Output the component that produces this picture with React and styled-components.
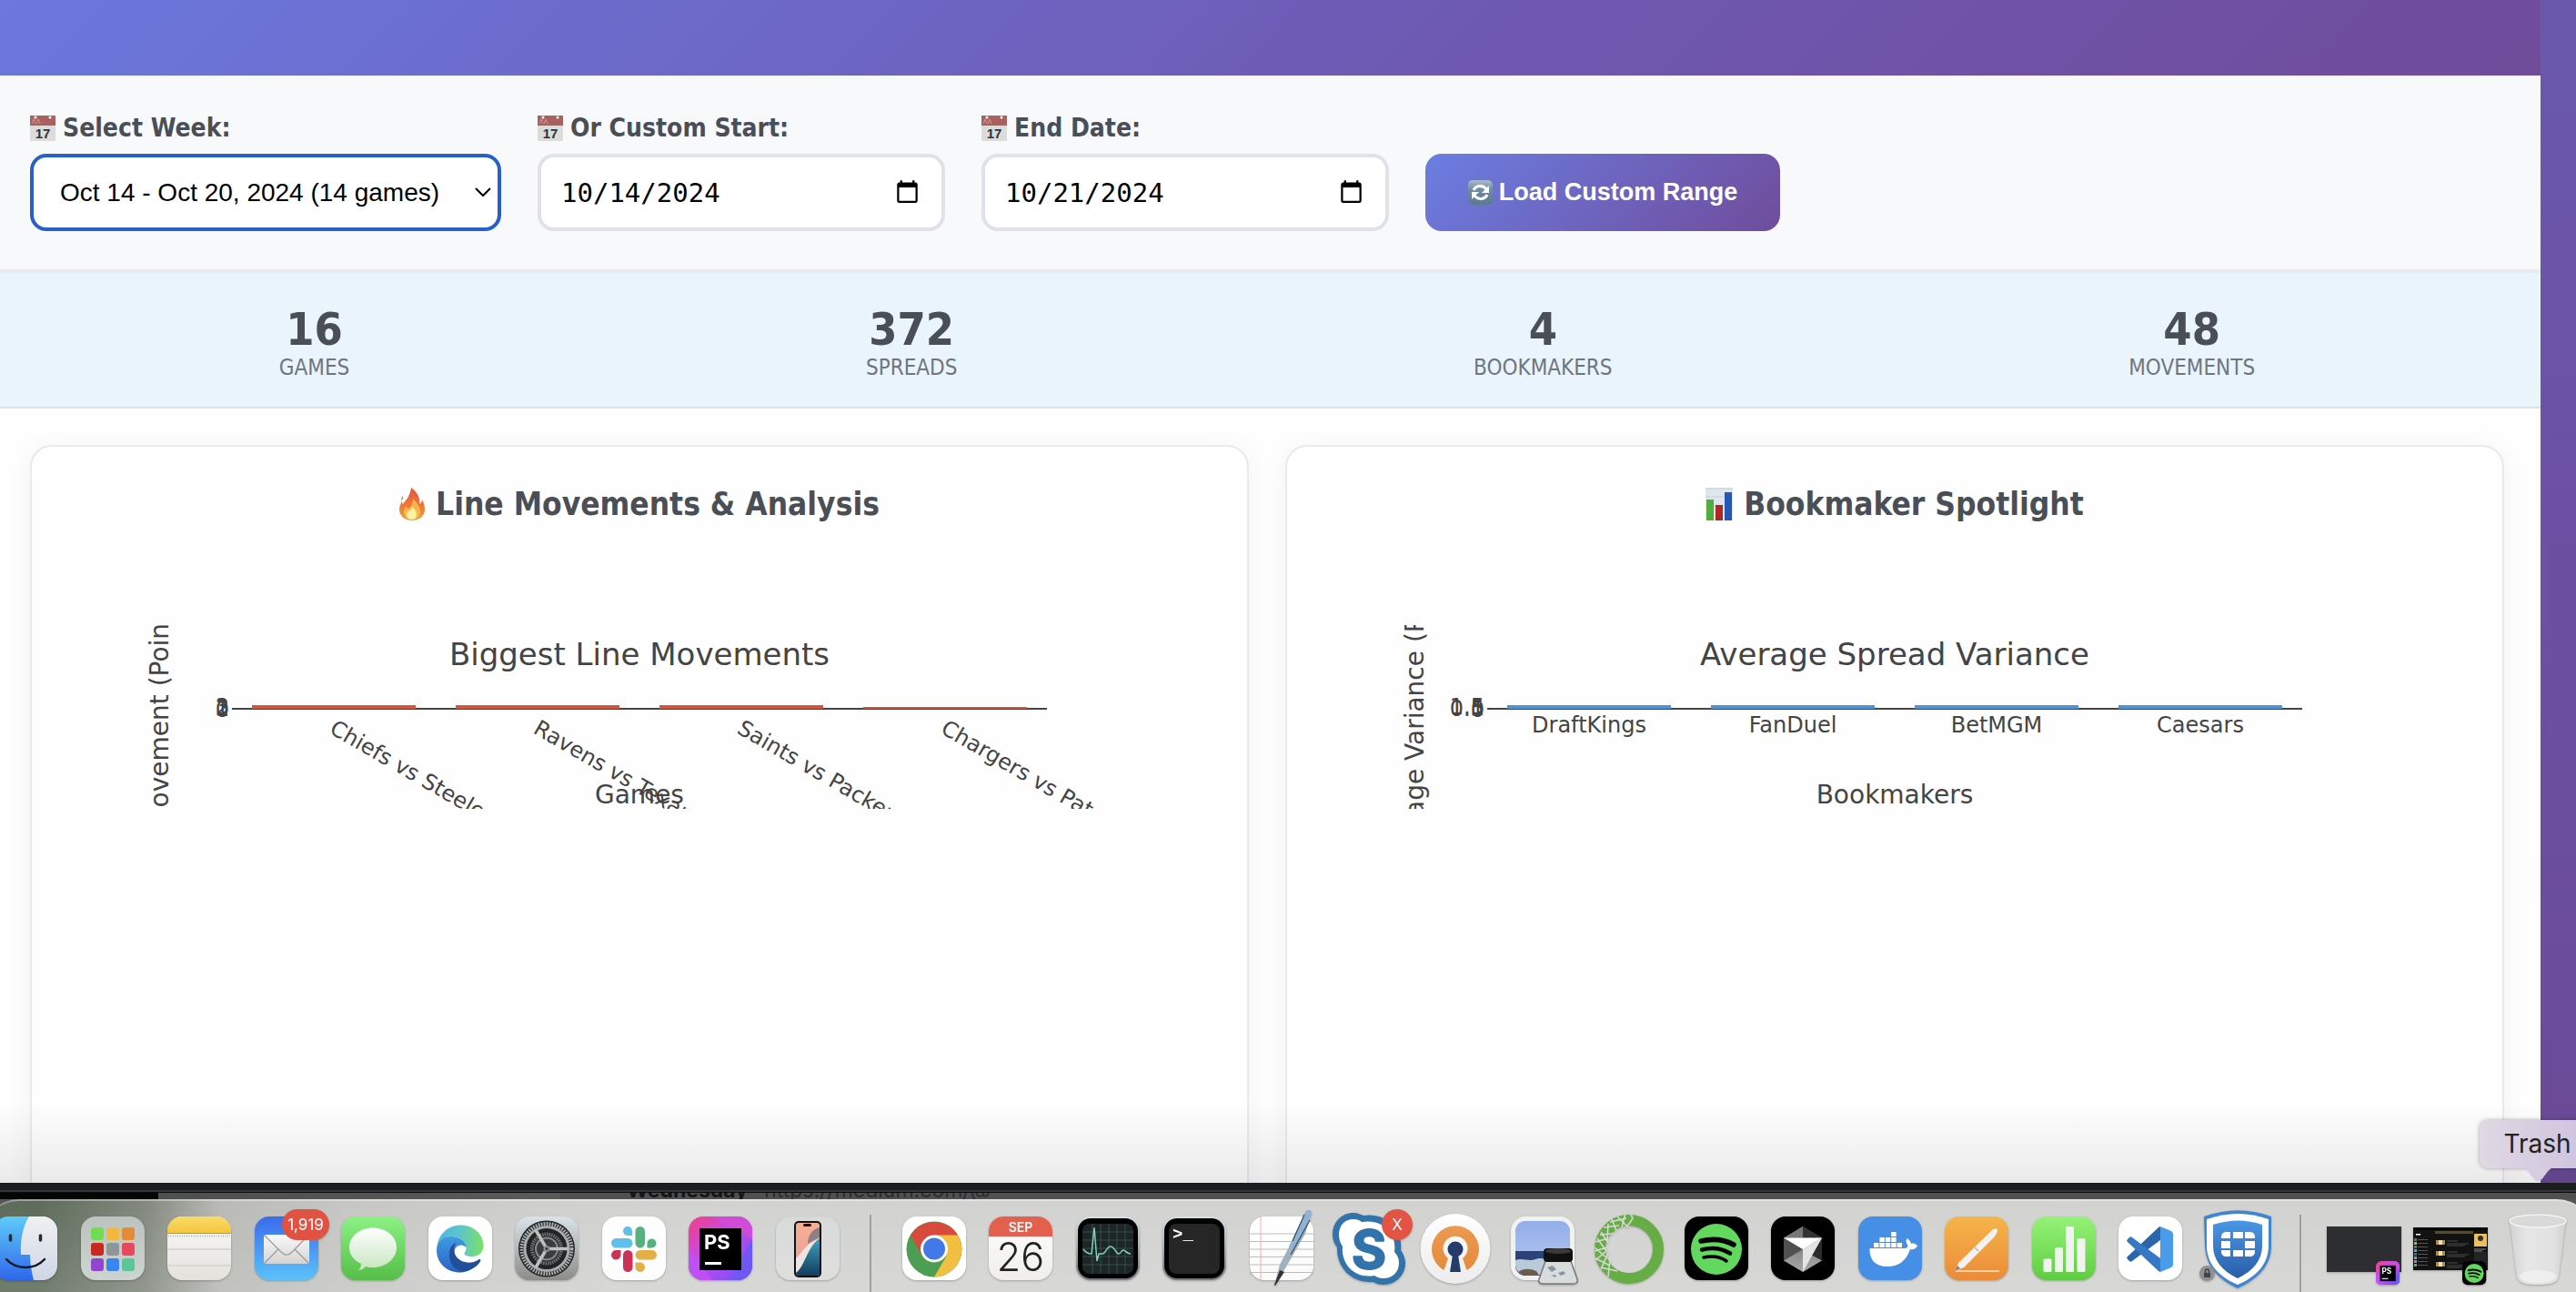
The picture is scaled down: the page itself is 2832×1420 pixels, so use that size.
import React from "react";
import styled, { createGlobalStyle } from "styled-components";

const UI = '"DejaVu Sans Condensed", "DejaVu Sans", sans-serif';
const MAC = 'Inter, "Liberation Sans", sans-serif';

const GlobalStyle = createGlobalStyle`
  *, *::before, *::after { box-sizing: border-box; }
  body { margin: 0; font-family: ${UI}; overflow: hidden; }
  button, input, select { margin: 0; }
`;

/* ---------- desktop ---------- */

const Desktop = styled.div`
  display: flex;
  flex-direction: column;
  height: 100vh;
  overflow: hidden;
  background: #565656;
`;

const BrowserWindow = styled.main`
  position: relative;
  flex: 1;
  min-height: 0;
  overflow: hidden;
  padding-right: 39px;
  background: linear-gradient(180deg, #6859ad 0%, #6c51a4 40%, #6a4a97 100%);
  &::after {
    content: "";
    position: absolute;
    inset: auto 0 0 0;
    height: 90px;
    background: linear-gradient(180deg, rgba(0, 0, 0, 0), rgba(0, 0, 0, 0.08));
  }
`;

const WindowEdge = styled.div`
  height: 11px;
  background: #1b1d1e;
  border-bottom: 1px solid #0c0c0c;
  box-shadow: inset 0 -2px 0 #333536;
`;

const Behind = styled.div`
  display: flex;
  align-items: flex-end;
  gap: 18px;
  height: 7px;
  padding-left: 689px;
  overflow: hidden;
  background: linear-gradient(90deg, #040604 174px, #4f4f4f 174px, #5a5a5a 616px, #505050 616px);
  font-family: ${MAC};
  font-size: 23px;
  line-height: 20px;
  color: #2c2c2c;
`;

const BehindStrong = styled.strong`
  color: #151515;
`;

/* ---------- page ---------- */

const Page = styled.div`
  min-height: 1400px;
  background: #fefefe;
`;

const Header = styled.header`
  height: 83px;
  background: linear-gradient(135deg, #6b78dd 0%, #6e58b0 60%, #704c9b 100%);
`;

const Controls = styled.form`
  display: flex;
  align-items: flex-end;
  gap: 40px;
  padding: 40px 40px 42px 33px;
  background: #f8f9fb;
  border-bottom: 4px solid #e9ebee;
`;

const Field = styled.div`
  display: flex;
  flex-direction: column;
  gap: 10px;
  width: ${(p) => p.$width}px;
`;

const Label = styled.label`
  display: flex;
  align-items: center;
  gap: 8px;
  line-height: 36px;
  font-size: 28px;
  font-weight: 700;
  color: #4a4f57;
`;

const SelectWrap = styled.div`
  position: relative;
  display: flex;
`;

const Select = styled.select`
  appearance: none;
  width: 100%;
  height: 85px;
  padding: 0 48px 0 29px;
  border: 4px solid #2860c9;
  border-radius: 18px;
  background: #fff;
  outline: none;
  font-family: "Liberation Sans", Arial, sans-serif;
  font-size: 28px;
  color: #000;
`;

const Chevron = styled.svg`
  position: absolute;
  right: 11px;
  top: 36px;
  pointer-events: none;
`;

const DateInput = styled.input`
  width: 100%;
  height: 85px;
  padding: 0 21px 0 22px;
  border: 4px solid #e0e2e8;
  border-radius: 18px;
  background: #fff;
  font-family: "DejaVu Sans Mono", monospace;
  font-size: 29px;
  color: #000;
  &::-webkit-datetime-edit-fields-wrapper,
  &::-webkit-datetime-edit-month-field,
  &::-webkit-datetime-edit-day-field,
  &::-webkit-datetime-edit-year-field {
    padding: 0;
  }
`;

const LoadButton = styled.button`
  display: flex;
  align-items: center;
  justify-content: center;
  gap: 7px;
  width: 390px;
  height: 85px;
  border: 0;
  border-radius: 18px;
  background: linear-gradient(135deg, #6b7ee2, #704c9b);
  font-family: "Liberation Sans", Arial, sans-serif;
  font-size: 27px;
  font-weight: 700;
  color: #fff;
`;

const Stats = styled.section`
  display: flex;
  justify-content: space-around;
  padding: 34px 30px 29px 23px;
  background: #e9f4fd;
  border-bottom: 2px solid #dee2e6;
`;

const Stat = styled.div`
  display: flex;
  flex-direction: column;
  align-items: center;
`;

const StatNumber = styled.div`
  font-size: 50px;
  line-height: 56px;
  font-weight: 700;
  color: #4a4f57;
`;

const StatLabel = styled.div`
  font-size: 24px;
  line-height: 28px;
  text-transform: uppercase;
  color: #6f767e;
`;

const Cards = styled.section`
  display: grid;
  grid-template-columns: 1fr 1fr;
  gap: 40px;
  padding: 40px 40px 0 33px;
`;

const Card = styled.article`
  display: flex;
  flex-direction: column;
  align-items: center;
  gap: 105px;
  height: 1100px;
  padding: 35px 40px;
  border: 2px solid #e9e9ee;
  border-radius: 24px;
  background: #fefefe;
  box-shadow: 0 4px 30px rgba(0, 0, 0, 0.05);
`;

const CardTitle = styled.h2`
  display: flex;
  align-items: center;
  gap: 12px;
  margin: 0;
  font-size: 35px;
  line-height: 56px;
  font-weight: 700;
  color: #4a4f57;
`;

const Chart = styled.svg`
  display: block;
  overflow: hidden;
  font-family: "DejaVu Sans", Verdana, sans-serif;
  fill: #444;
`;

/* ---------- dock ---------- */

const Dock = styled.nav`
  display: flex;
  align-items: flex-start;
  justify-content: space-between;
  height: 102px;
  margin: 0 -19px;
  padding: 17px 26px 0 12px;
  border-top: 2px solid rgba(255, 255, 255, 0.3);
  border-radius: 40px 40px 0 0;
  background:
    linear-gradient(180deg, rgba(255, 255, 255, 0), rgba(255, 255, 255, 0.12)),
    linear-gradient(90deg, #5d6c5a 60px, #84897f 180px, #b9b9b6 260px, #c6c6c4 400px, #d2d2d0 700px);
`;

const DockButton = styled.button`
  flex: none;
  width: 70px;
  height: 70px;
  padding: 0;
  border: 0;
  background: none;
  svg {
    display: block;
    overflow: visible;
    filter: drop-shadow(0 1px 1px rgba(0, 0, 0, 0.25));
  }
`;

const Divider = styled.div`
  flex: none;
  width: 2px;
  height: 90px;
  margin: -2px 8px 0;
  background: #a0a09f;
`;

const Tooltip = styled.div`
  position: absolute;
  z-index: 2;
  right: -21px;
  bottom: 16px;
  width: 127px;
  height: 53px;
  border-radius: 9px;
  background: linear-gradient(90deg, #dfd9e3, #cdc1de);
  box-shadow: 0 0 4px rgba(0, 0, 0, 0.35);
  font-family: ${MAC};
  font-size: 28px;
  line-height: 53px;
  text-align: center;
  color: #222;
`;

const TooltipTail = styled.svg`
  position: absolute;
  left: 46px;
  top: 52px;
`;

/* ---------- emoji drawings ---------- */

const CalendarEmoji = () => (
  <svg width="28" height="28" viewBox="0 0 28 28" aria-hidden="true">
    <rect width="28" height="28" rx="1" fill="#dcdcda" />
    <rect width="28" height="11" fill="#a9605e" />
    <path d="M2 9l2-5 2 5M7 9l2-5 2 5" stroke="#c99" fill="none" />
    <circle cx="6" cy="2" r="1.5" fill="#fff" />
    <circle cx="22" cy="2" r="1.5" fill="#fff" />
    <text x="14" y="25" fontSize="15" textAnchor="middle" fill="#333" fontFamily="Liberation Sans">17</text>
  </svg>
);

const RefreshEmoji = () => (
  <svg width="27" height="27" viewBox="0 0 27 27" aria-hidden="true">
    <defs>
      <linearGradient id="rf" x2="0" y2="1">
        <stop stopColor="#a9bccb" /><stop offset=".4" stopColor="#6d8ba3" /><stop offset="1" stopColor="#5a7a91" />
      </linearGradient>
    </defs>
    <rect width="27" height="27" rx="5" fill="url(#rf)" />
    <g fill="none" stroke="#fff" strokeWidth="3">
      <path d="M6 11a8 7.500 0 0 1 14-1" />
      <path d="M21 16a8 7.500 0 0 1-14 1" />
    </g>
    <path d="M23 6v8h-8zM4 21v-8h8z" fill="#fff" />
  </svg>
);

const FireEmoji = () => (
  <svg width="28" height="36" viewBox="0 0 28 36" aria-hidden="true">
    <defs>
      <linearGradient id="fr" x2="0" y2="1">
        <stop stopColor="#e5533c" /><stop offset=".55" stopColor="#ec7a38" /><stop offset="1" stopColor="#f0a03c" />
      </linearGradient>
    </defs>
    <path d="M13 0c7 5 10 11 9 18 2-1 3-3 3-5 2 4 3 7 3 11 0 7-6 12-14 12S0 31 0 24c0-4 2-7 3-10 0 2 0 3 1 4 2-3 8-8 9-18z" fill="url(#fr)" />
    <path d="M4 9c-1 2-2 3-2 5 2-1 2-3 2-5z" fill="#e5533c" />
    <path d="M15 12c4 4 8 9 8 14 0 6-4 9-9 9s-9-3-9-8c0-3 1-5 3-7 0 2 1 3 2 3 3-2 5-5 5-11z" fill="#f6b64a" />
    <path d="M14 21c3 3 5 5 5 8 0 4-2 6-5 6s-6-2-6-5 2-4 3-5c2 0 3-2 3-4z" fill="#fdf3a0" />
  </svg>
);

const BarsEmoji = () => (
  <svg width="30" height="36" viewBox="0 0 30 36" aria-hidden="true">
    <rect width="30" height="36" fill="#dfe6ee" />
    <path d="M0 1h30M0 10h30M0 20h30" stroke="#c6d0da" />
    <rect x="1" y="13" width="8" height="23" fill="#4fae3c" />
    <rect x="11" y="19" width="8" height="17" fill="#ad2a22" />
    <rect x="21" y="5" width="8" height="31" fill="#2557b4" />
  </svg>
);

/* ---------- charts ---------- */

function BarChart({ title, xTitle, yTitle, color, bars, ticks, angled }) {
  return (
    <Chart width="1256" height="202" viewBox="0 0 1256 202" role="img" aria-label={title}>
      <text x="628" y="44" fontSize="34" textAnchor="middle">{title}</text>
      <rect x="180" y="91" width="896" height="2" />
      {bars.map((b, i) => (
        <g key={b.name}>
          <rect x={202 + i * 224} y={92 - b.height} width="180" height={b.height} fill={color} />
          {angled ? (
            <text transform={`translate(${286 + i * 224} 118) rotate(30)`} fontSize="24">{b.name}</text>
          ) : (
            <text x={292 + i * 224} y="118" fontSize="24" textAnchor="middle">{b.name}</text>
          )}
        </g>
      ))}
      {ticks.map((t, i) => (
        <text key={t} x="177" y={101 - i} fontSize="24" textAnchor="end">{t}</text>
      ))}
      <text x="628" y="196" fontSize="28" textAnchor="middle">{xTitle}</text>
      <text transform="translate(110 93) rotate(-90)" fontSize="28" textAnchor="middle">{yTitle}</text>
    </Chart>
  );
}

/* ---------- dock icons, each on a 70 by 70 tile ---------- */

const Grad = ({ id, from, to }) => (
  <defs>
    <linearGradient id={id} x2="0" y2="1">
      <stop stopColor={from} /><stop offset="1" stopColor={to} />
    </linearGradient>
  </defs>
);

const Tile = ({ id, from, to }) => (
  <>
    <Grad id={id} from={from} to={to} />
    <rect width="70" height="70" rx="16" fill={`url(#${id})`} />
  </>
);

const Finder = () => (
  <>
    <Tile id="fi" from="#5fcbf8" to="#2f67ea" />
    <Grad id="fi2" from="#f0f0f2" to="#cfd6e4" />
    <path d="M39 0h15a16 16 0 0 1 16 16v38a16 16 0 0 1-16 16H44c-2-8-4-18-4-28H30c-1-16 2-31 9-42z" fill="url(#fi2)" />
    <path d="M18.500 21v5M51.500 21v5" stroke="#1e2a3a" strokeWidth="3.500" strokeLinecap="round" />
    <path d="M14 47c11 12 31 12 42 0" fill="none" stroke="#111a26" strokeWidth="2.500" strokeLinecap="round" />
  </>
);

const Launchpad = () => (
  <>
    <Tile id="lp" from="#bcc3bf" to="#cdd3cf" />
    {["#6fdc52", "#f2b93c", "#e58a35", "#c8281f", "#8f9699", "#e8485c", "#9246d0", "#3a86f0", "#5cc69a"].map((c, i) => (
      <rect key={c} x={11 + (i % 3) * 17} y={12 + Math.floor(i / 3) * 17} width="14" height="14" rx="3" fill={c} />
    ))}
  </>
);

const Notes = () => (
  <>
    <Tile id="no" from="#fbfaf8" to="#e3e1dc" />
    <Grad id="no2" from="#fadb68" to="#f4c63c" />
    <path d="M0 18v-2A16 16 0 0 1 16 0h38a16 16 0 0 1 16 16v2z" fill="url(#no2)" />
    <path d="M0 18.500h70" stroke="#b9963a" />
    <path d="M1 21.500h68" stroke="#aaa" strokeWidth="1.500" strokeDasharray="1 1.500" />
    <path d="M0 36h70M0 54h70" stroke="#d3d2d0" strokeWidth="1.500" />
  </>
);

const Mail = () => (
  <>
    <Tile id="ma" from="#3a6ceb" to="#5cc2f9" />
    <Grad id="ma2" from="#fafafa" to="#d3d3d3" />
    <rect x="10" y="20" width="50" height="32" rx="3" fill="url(#ma2)" />
    <path d="M11 21l19 19c3 3 7 3 10 0l19-19M11 51l15-15M59 51L44 36" fill="none" stroke="#9a9a9a" strokeWidth="1.200" />
    <rect x="30" y="-8" width="52" height="34" rx="17" fill="#e15243" />
    <text x="56" y="15" fontFamily="Inter" fontSize="17" textAnchor="middle" fill="#fff">1,919</text>
  </>
);

const Messages = () => (
  <>
    <Tile id="me" from="#8bf284" to="#56bd48" />
    <Grad id="me2" from="#ffffff" to="#c6e6bf" />
    <path d="M35 12.500c14.500 0 26 9.500 26 21.500S49.500 56 35 56c-3 0-5 0-8-1-2 2-5 4-8 4 2-2 3-4 3-7C14 48 9 42 9 34c0-12 11.500-21.500 26-21.500z" fill="url(#me2)" />
  </>
);

const Edge = () => (
  <>
    <defs>
      <linearGradient id="ed"><stop stopColor="#4fb4e6" /><stop offset=".5" stopColor="#5cc6c8" /><stop offset="1" stopColor="#7be065" /></linearGradient>
    </defs>
    <Grad id="ed2" from="#3f9be2" to="#2a63c4" />
    <rect width="70" height="70" rx="16" fill="#fff" />
    <path d="M9.500 33C11 19 22 9.500 35.500 9.500c14.500 0 25 10.500 25 22.500 0 8-6 12-12.500 12-4.500 0-8.500-1-8.500-3s2-2.500 2-6.500c0-6-6-12.500-16.500-12.500C17 22 12 27 9.500 33z" fill="url(#ed)" />
    <path d="M9 37c0-9 7-15 16-15 10 0 16.500 6 16.500 12-4-4.500-13-3-13 6 0 10 11 17 23 14-4 5-11 7.500-16.500 7.500C20 61.500 9 51 9 37z" fill="url(#ed2)" />
    <path d="M23 42c0-7 3-12 8-13.500-3 3-3 7-2.500 10.500C30 48 43 55 55 47.500c2-1 3 0 2 2C52 57 44 60.500 36 60.500 28 58 23 51 23 42z" fill="#214f99" />
  </>
);

const Settings = () => (
  <>
    <Tile id="se" from="#d8e3ea" to="#8e8c88" />
    <circle cx="35" cy="35.500" r="31" fill="#222426" />
    <circle cx="35" cy="35.500" r="27.500" fill="none" stroke="#aeb1b2" strokeWidth="4" strokeDasharray="1.800 1.200" />
    <circle cx="35" cy="35.500" r="24" fill="none" stroke="#a9adae" strokeWidth="3" />
    <circle cx="35" cy="35.500" r="16" fill="none" stroke="#717476" strokeWidth="4" strokeDasharray="1.500 1" />
    <circle cx="35" cy="35.500" r="12" fill="#3a3c3e" stroke="#8a8d8f" strokeWidth="2" />
    <path d="M35 35.500h24M35 35.500L23 15M35 35.500L23 56" stroke="#bcc0c1" strokeWidth="3.500" />
    <circle cx="35" cy="35.500" r="3.500" fill="#888b8c" />
    <circle cx="35" cy="35.500" r="1.200" fill="#222" />
  </>
);

const Slack = () => (
  <>
    <rect width="70" height="70" rx="16" fill="#fdfdfd" />
    <g fill="#5fc0ea"><path d="M33 21V16a5 5 0 1 0-5 5z" /><rect x="10" y="24" width="23.500" height="10.500" rx="5.250" /></g>
    <g fill="#57b07f"><rect x="36.500" y="11" width="10.500" height="23.500" rx="5.250" /><path d="M49.500 34.500h5a5 5 0 1 0-5-5z" /></g>
    <g fill="#cd3158"><path d="M20.500 37h-5a5.250 5.250 0 1 0 5 5z" /><rect x="23" y="37" width="10.500" height="24" rx="5.250" /></g>
    <g fill="#e2b047"><rect x="36.500" y="37" width="23.500" height="10.500" rx="5.250" /><path d="M36.500 50.500v5a5.250 5.250 0 1 0 5-5z" /></g>
  </>
);

const PhpStorm = () => (
  <>
    <defs>
      <linearGradient id="ps" x2="1" y2="1"><stop stopColor="#f43f83" /><stop offset=".45" stopColor="#c44af0" /><stop offset="1" stopColor="#6a52f7" /></linearGradient>
      <clipPath id="psc"><rect width="70" height="70" rx="16" /></clipPath>
    </defs>
    <g clipPath="url(#psc)">
      <rect width="70" height="70" fill="url(#ps)" />
      <path d="M0 35L26 70H0z" fill="#c04ff5" />
      <path d="M25 0h45v25z" fill="#d04bd8" />
      <path d="M70 25v45H45z" fill="#6f57f6" />
    </g>
    <rect x="12" y="13" width="46" height="46" fill="#000" />
    <text x="17" y="36" fontFamily="Inter" fontSize="22" fontWeight="700" fill="#fff">PS</text>
    <rect x="18" y="50" width="18" height="3" fill="#fff" />
  </>
);

const Phone = () => (
  <>
    <Tile id="ip" from="#d8dada" to="#dededd" />
    <Grad id="ip2" from="#f3b092" to="#ef9a9c" />
    <Grad id="ip3" from="#3fa3bf" to="#123c5e" />
    <rect x="20" y="5" width="30" height="62" rx="5" fill="#111" />
    <rect x="22" y="7" width="26" height="58" rx="3" fill="url(#ip2)" />
    <path d="M48 12c-8 2-13 9-13 18l13-7z" fill="#8c8086" />
    <path d="M22 46c8-7 10-16 26-22v10L30 60l-8 2z" fill="#efe4e2" />
    <path d="M48 24v38a3 3 0 0 1-3 3H25a3 3 0 0 1-3-3c10-7 12-28 26-38z" fill="url(#ip3)" />
    <rect x="30" y="8" width="9" height="3" rx="1.500" fill="#111" />
  </>
);

const Chrome = () => (
  <>
    <rect width="70" height="70" rx="16" fill="#fff" />
    <circle cx="35" cy="36" r="30.500" fill="#4c9e52" />
    <path d="M9 20.500A30.500 30.500 0 0 1 61 20.500H35L21.500 43z" fill="#d84b3c" />
    <path d="M35 66.500A30.500 30.500 0 0 0 61 20.500H35l13.500 23z" fill="#f2bf42" />
    <circle cx="35" cy="35.500" r="15" fill="#fff" />
    <circle cx="35" cy="35.500" r="12" fill="#4179e8" />
  </>
);

const CalendarApp = () => (
  <>
    <Tile id="ca" from="#ffffff" to="#efeeec" />
    <path d="M0 22v-6A16 16 0 0 1 16 0h38a16 16 0 0 1 16 16v6z" fill="#e3604f" />
    <text x="35" y="17" fontFamily="Inter" fontSize="14" fontWeight="600" textAnchor="middle" fill="#fff">SEP</text>
    <text x="35" y="60" fontFamily="Inter" fontSize="43" fontWeight="300" textAnchor="middle" fill="#222">26</text>
  </>
);

const Activity = () => (
  <>
    <Tile id="ac" from="#d3e4ee" to="#77767a" />
    <rect x="2" y="2" width="66" height="66" rx="14" fill="#000" />
    <rect x="7" y="8" width="56" height="55" rx="7" fill="#1b2625" />
    <path d="M18 8v55M27 8v55M36 8v55M45 8v55M54 8v55M7 17h56M7 26h56M7 35h56M7 44h56M7 53h56" stroke="#3a4d49" />
    <path d="M8 36c3 4 6 5 9 5l3-29 3 37 2-8h4c4 0 4-8 9-8s5 8 9 8c3 0 2-4 5-4s3 4 8 4" fill="none" stroke="#7fd0b4" strokeWidth="1.500" />
  </>
);

const Terminal = () => (
  <>
    <Tile id="te" from="#d3e4ee" to="#77767a" />
    <rect x="2" y="2" width="66" height="66" rx="14" fill="#000" />
    <rect x="7" y="8" width="56" height="55" rx="8" fill="#262626" />
    <text x="11" y="25" fontFamily="Liberation Mono" fontSize="19" fontWeight="700" fill="#fff">&gt;_</text>
  </>
);

const TextEdit = () => (
  <>
    <Tile id="tx" from="#fff" to="#fafafa" />
    <path d="M0 19h70M0 27.500h70M0 36h70M0 44.500h70M0 53h70M0 61.500h70" stroke="#bdbdbd" />
    <path d="M12 0v70" stroke="#f2b0ae" />
    <path d="M62-6c2-2 6-1 6 2L61 19 39 57l-11 19-1-1 6-22 14-27z" fill="#9fb0bf" />
    <path d="M62-6c2-2 6-1 6 2L58 20l-9 16-6-3 4-8z" fill="#8fb3d6" />
    <path d="M60-2L47 27M66 4L45 42" stroke="#3d4a57" strokeWidth="1.200" />
    <path d="M33 59l5 2-10 15-1-1z" fill="#333" />
  </>
);

const Skype = () => (
  <>
    <path d="M18-4c5 0 8 2 11 3 24-4 44 15 41 38 2 3 5 8 5 14 0 14-11 24-24 24-5 0-8-1-11-3C16 74-1 56 0 34-3 30-5 26-5 20-5 6 5-4 18-4z" fill="#3273ab" />
    <path d="M18 3c4 0 7 1 9 3 22-4 39 12 36 33 3 3 5 7 5 12 0 10-7 17-17 17-4 0-7-1-10-3C20 69 4 53 6 33 4 30 2 26 2 20 2 10 8 3 18 3z" fill="#fff" />
    <text x="35" y="57" fontFamily="Inter" fontSize="58" fontWeight="700" textAnchor="middle" fill="#3273ab" stroke="#3273ab" strokeWidth="2" strokeLinejoin="round">S</text>
    <circle cx="66" cy="9" r="17" fill="#e45445" />
    <text x="66" y="15" fontFamily="Inter" fontSize="17" textAnchor="middle" fill="#fff">X</text>
  </>
);

const OpenVpn = () => (
  <>
    <Grad id="ov" from="#ffffff" to="#ececec" />
    <Grad id="ov2" from="#ea9a52" to="#e68a3c" />
    <circle cx="35" cy="35.500" r="38.500" fill="url(#ov)" />
    <path d="M22.500 59A26 26 0 1 1 47.500 59L43 46a13.500 13.500 0 1 0-16 0z" fill="url(#ov2)" />
    <circle cx="35" cy="36" r="8.500" fill="#263a6b" />
    <path d="M32 42h6l3 19H29z" fill="#263a6b" />
  </>
);

const Preview = () => (
  <>
    <rect width="70" height="70" rx="16" fill="#f1f1f2" />
    <Grad id="pv" from="#92aee8" to="#b8c9f0" />
    <rect x="5" y="5" width="60" height="60" rx="11" fill="url(#pv)" />
    <path d="M5 38h60v16a11 11 0 0 1-11 11H16A11 11 0 0 1 5 54z" fill="#2c4379" />
    <path d="M5 48c8-3 14 2 22-1s14 3 20-1v18H16A11 11 0 0 1 5 54z" fill="#b9cbd8" />
    <path d="M8 61c6-4 12-4 20-1l3 5H16z" fill="#6b5b4a" />
    <path d="M38 49h28l7 20c1 4-2 5-5 5H35c-4 0-5-3-4-5z" fill="#d9dcdd" stroke="#777" strokeWidth="1.500" />
    <path d="M40 56l6-2 4 4-5 3zM52 62l6-2 2 3-5 2zM44 65l5-1 1 3z" fill="#8795a0" />
    <rect x="36" y="35" width="32" height="15" rx="4" fill="#111" />
    <ellipse cx="52" cy="38" rx="14" ry="3" fill="#3a3a3a" />
  </>
);

const Anaconda = () => (
  <>
    <circle cx="35" cy="36" r="32" fill="none" stroke="#65ad44" strokeWidth="12" />
    <g stroke="#d8d8d6" strokeWidth="1.600" fill="none">
      <path d="M36-4l3 6-6 9M31-4l-4 16M22 0l12 12M14 6l18-4M16 3l5 13M7 12l17-2M12 8l-1 18M3 20l14-1M4 17l8 12M-2 28l14-4M0 24l10 14M-3 38l14-4M-3 34l14 12M-2 48l12-10M-2 46l16 8M4 58l8-18M4 56l18 4M12 66l2-18" />
    </g>
  </>
);

const SpotifyMark = () => (
  <>
    <rect width="70" height="70" rx="16" fill="#000" />
    <circle cx="35" cy="36" r="28" fill="#62d85f" />
    <g fill="none" stroke="#000" strokeLinecap="round">
      <path d="M18 27c13-3 25-2 36 4" strokeWidth="5.500" />
      <path d="M19 36.500c12-3 22-1.500 31 4" strokeWidth="4.500" />
      <path d="M21 45c10-2 18-1 25 4" strokeWidth="3.500" />
    </g>
  </>
);

const Cursor = () => (
  <>
    <rect width="70" height="70" rx="16" fill="#000" />
    <Grad id="cu" from="#666" to="#aaa" />
    <path d="M35 11l21 12.500v25L35 61 14 48.500v-25z" fill="url(#cu)" />
    <path d="M35 11L14 23.500h21z" fill="#777" />
    <path d="M35 11l21 12.500H35z" fill="#333" />
    <path d="M14 23.500L35 36 14 48.500z" fill="#505050" />
    <path d="M56 23.500v25L44 42z" fill="#2b2b2b" />
    <path d="M14 23.500h42L35 36z" fill="#fff" />
    <path d="M56 23.500L35 61V36z" fill="#e4e4e4" />
  </>
);

const Docker = () => (
  <>
    <rect width="70" height="70" rx="16" fill="#458fe6" />
    <path d="M12.500 35H50c4 0 5-2 4-4-2-3-2-5 0-7 2 2 4 4 4 6 3-1 5 0 7 2-2 4-5 5-8 4C53 48 45 55 32 55c-13 0-20-7-19.500-20z" fill="#fff" />
    <g fill="#fff">
      {[[0, 0], [1, 0], [2, 0], [3, 0], [4, 0], [1, 1], [2, 1], [3, 1], [3, 2]].map(([c, r]) => (
        <rect key={`${c}-${r}`} x={17 + c * 6.4} y={29 - r * 6} width="5.400" height="5" />
      ))}
    </g>
  </>
);

const Pages = () => (
  <>
    <Tile id="pg" from="#f5b54a" to="#ec8b38" />
    <path d="M12 60h48" stroke="#f8cf9c" strokeWidth="2" />
    <path d="M11 60l4-9 37-36c3-3 7-2 6 1-1 4-4 7-7 10L21 56z" fill="#f4f2f0" />
    <path d="M33 34l4 4" stroke="#b5b0aa" strokeWidth="1.500" />
    <path d="M11 60l3-6 3 3z" fill="#8a7a66" />
  </>
);

const Numbers = () => (
  <>
    <Tile id="nu" from="#95f378" to="#5fcc42" />
    <g fill="#f1f3f1">
      <rect x="12.500" y="46.500" width="9" height="14.500" rx="1.500" />
      <rect x="25" y="34" width="9" height="27" rx="1.500" />
      <rect x="37" y="11" width="9" height="50" rx="1.500" />
      <rect x="49.500" y="24" width="9" height="37" rx="1.500" />
    </g>
  </>
);

const VsCode = () => (
  <>
    <rect width="70" height="70" rx="16" fill="#fff" />
    <path d="M46 11v15L15 49c-1 1-2 1-3 0l-2-2c-1-1-1-2 0-3l34-32z" fill="#2a66ad" />
    <path d="M46 61V46L15 23c-1-1-2-1-3 0l-2 2c-1 1-1 2 0 3l34 32z" fill="#3478c6" />
    <path d="M46 11l12 5c1 1 2 2 2 3v34c0 1-1 2-2 3l-12 5z" fill="#4a9bea" />
  </>
);

const FortiClient = () => (
  <>
    <Grad id="fo" from="#4a97e6" to="#2a5ea8" />
    <path d="M-2 0C24-9 47-9 72 0v32c0 22-15 37-37 47C13 69 0 54-1 32z" fill="#3f85d2" />
    <path d="M1 3C25-5 46-5 69 3v29c0 20-13 34-34 43C14 66 1 52 1 32z" fill="#fff" />
    <path d="M8 9c19-6 36-6 54 0v23c0 16-10 28-27 36C18 60 8 48 8 32z" fill="url(#fo)" />
    <g fill="#fff">
      <path d="M17 24v-1c0-4 2-6 6-6h4v7zM30 17h11v7H30zM43 17h5c4 0 6 2 6 6v1H43zM17 27h10v8H17zM43 27h11v8H43zM17 37h10v7h-4c-4 0-6-2-6-6zM30 37h11v7H30zM43 37h11v1c0 4-2 6-6 6h-5z" />
    </g>
    <circle cx="1.500" cy="62.500" r="8.500" fill="#8d9194" />
    <rect x="-2" y="62" width="7" height="5" fill="#444" />
    <path d="M-.5 62v-2a2 2 0 0 1 4 0v2" fill="none" stroke="#444" strokeWidth="1.500" />
  </>
);

const StormWindow = () => (
  <>
    <rect x="-6" y="11" width="82" height="50" fill="#2c2e32" />
    <g transform="translate(48 49) scale(.375)"><PhpStorm /></g>
  </>
);

const SpotifyWindow = () => (
  <>
    <rect x="-6" y="12" width="82" height="47" fill="#121212" />
    <rect x="-6" y="12" width="82" height="3" fill="#050505" />
    <rect x="18" y="16" width="42" height="3" fill="#5b4a26" />
    <rect x="-3" y="19" width="5" height="1.500" fill="#fff" />
    {["#2f8f6a", "#c9a468", "#3f8a86", "#5ba9b8", "#56656a", "#6aa7c4", "#b58f5b", "#4fa3c4"].map((c, i) => (
      <g key={c}><rect x="-5" y={24 + i * 4} width="3" height="3" fill={c} /><rect x="-1" y={25 + i * 4} width="11" height="1" fill="#555" /></g>
    ))}
    {[26, 38, 50].map((y) => (
      <g key={y}><rect x="19" y={y} width="10" height="5" fill="#b8893a" /><rect x="22" y={y} width="4" height="5" fill="#eee0b8" /><path d={`M31 ${y + 1}h12M31 ${y + 4}h24M31 ${y + 6}h20`} stroke="#4a4a4a" /></g>
    ))}
    <rect x="61" y="19" width="14" height="14" fill="#eebf62" />
    <circle cx="68" cy="24" r="3" fill="#333" />
    <path d="M61 36h13M61 38h9" stroke="#888" />
    <rect x="61" y="39" width="14" height="16" fill="#242424" />
    <g transform="translate(48 49) scale(.375)"><SpotifyMark /></g>
  </>
);

const Trash = () => (
  <>
    <defs>
      <linearGradient id="tr"><stop stopColor="#d2d2d3" /><stop offset=".3" stopColor="#e6e6e7" /><stop offset=".8" stopColor="#e1e1e2" /><stop offset="1" stopColor="#cdcdce" /></linearGradient>
    </defs>
    <path d="M4 5l8 61c1 6 7 9 23 9s22-3 23-9l8-61z" fill="url(#tr)" />
    <ellipse cx="35" cy="66" rx="20" ry="7" fill="#f4f4f5" opacity=".7" />
    <ellipse cx="35" cy="5" rx="31" ry="7" fill="#d9d9d9" stroke="#f5f5f5" strokeWidth="1.500" />
  </>
);

const DOCK = [
  ["Finder", Finder], ["Launchpad", Launchpad], ["Notes", Notes], ["Mail", Mail], ["Messages", Messages],
  ["Microsoft Edge", Edge], ["System Settings", Settings], ["Slack", Slack], ["PhpStorm", PhpStorm], ["iPhone Mirroring", Phone],
  null,
  ["Google Chrome", Chrome], ["Calendar", CalendarApp], ["Activity Monitor", Activity], ["Terminal", Terminal], ["TextEdit", TextEdit],
  ["Skype", Skype], ["OpenVPN Connect", OpenVpn], ["Preview", Preview], ["Anaconda", Anaconda], ["Spotify", SpotifyMark],
  ["Cursor", Cursor], ["Docker", Docker], ["Pages", Pages], ["Numbers", Numbers], ["Visual Studio Code", VsCode], ["FortiClient", FortiClient],
  null,
  ["PhpStorm window", StormWindow], ["Spotify window", SpotifyWindow], ["Trash", Trash],
];

const STATS = [["16", "Games"], ["372", "Spreads"], ["4", "Bookmakers"], ["48", "Movements"]];

export default function App() {
  return (
    <Desktop>
      <GlobalStyle />
      <BrowserWindow>
        <Page>
          <Header />
          <Controls onSubmit={(e) => e.preventDefault()}>
            <Field $width={518}>
              <Label htmlFor="week"><CalendarEmoji />Select Week:</Label>
              <SelectWrap>
                <Select id="week" defaultValue="w7">
                  <option value="w7">Oct 14 - Oct 20, 2024 (14 games)</option>
                </Select>
                <Chevron width="18" height="12" viewBox="0 0 18 12" aria-hidden="true">
                  <path d="M1 2l8 8 8-8" fill="none" stroke="#000" strokeWidth="2" />
                </Chevron>
              </SelectWrap>
            </Field>
            <Field $width={448}>
              <Label htmlFor="start"><CalendarEmoji />Or Custom Start:</Label>
              <DateInput id="start" type="date" defaultValue="2024-10-14" />
            </Field>
            <Field $width={448}>
              <Label htmlFor="end"><CalendarEmoji />End Date:</Label>
              <DateInput id="end" type="date" defaultValue="2024-10-21" />
            </Field>
            <LoadButton type="submit"><RefreshEmoji />Load Custom Range</LoadButton>
          </Controls>
          <Stats>
            {STATS.map(([n, l]) => (
              <Stat key={l}><StatNumber>{n}</StatNumber><StatLabel>{l}</StatLabel></Stat>
            ))}
          </Stats>
          <Cards>
            <Card>
              <CardTitle><FireEmoji />Line Movements &amp; Analysis</CardTitle>
              <BarChart
                title="Biggest Line Movements" xTitle="Games" yTitle="Movement (Points)" color="#d15543" angled
                ticks={["0", "1", "2", "3"]}
                bars={[
                  { name: "Chiefs vs Steelers", height: 4 }, { name: "Ravens vs Texans", height: 4 },
                  { name: "Saints vs Packers", height: 4 }, { name: "Chargers vs Patriots", height: 2 },
                ]}
              />
            </Card>
            <Card>
              <CardTitle><BarsEmoji />Bookmaker Spotlight</CardTitle>
              <BarChart
                title="Average Spread Variance" xTitle="Bookmakers" yTitle="Average Variance (Points)" color="#4d93d6"
                ticks={["0", "0.5", "1", "1.5"]}
                bars={[
                  { name: "DraftKings", height: 4 }, { name: "FanDuel", height: 4 },
                  { name: "BetMGM", height: 4 }, { name: "Caesars", height: 4 },
                ]}
              />
            </Card>
          </Cards>
        </Page>
        <Tooltip role="tooltip">
          Trash
          <TooltipTail width="36" height="16" viewBox="0 0 36 16" aria-hidden="true">
            <path d="M0 0h36c-8 1-11 14-18 16C11 14 8 1 0 0z" fill="#d6cde1" />
          </TooltipTail>
        </Tooltip>
      </BrowserWindow>
      <WindowEdge />
      <Behind><BehindStrong>Wednesday</BehindStrong><span>https://medium.com/@</span></Behind>
      <Dock aria-label="Dock">
        {DOCK.map((item, i) => {
          if (!item) return <Divider key={i} />;
          const [name, Icon] = item;
          return (
            <DockButton key={name} type="button" aria-label={name}>
              <svg width="70" height="70" viewBox="0 0 70 70" aria-hidden="true"><Icon /></svg>
            </DockButton>
          );
        })}
      </Dock>
    </Desktop>
  );
}
